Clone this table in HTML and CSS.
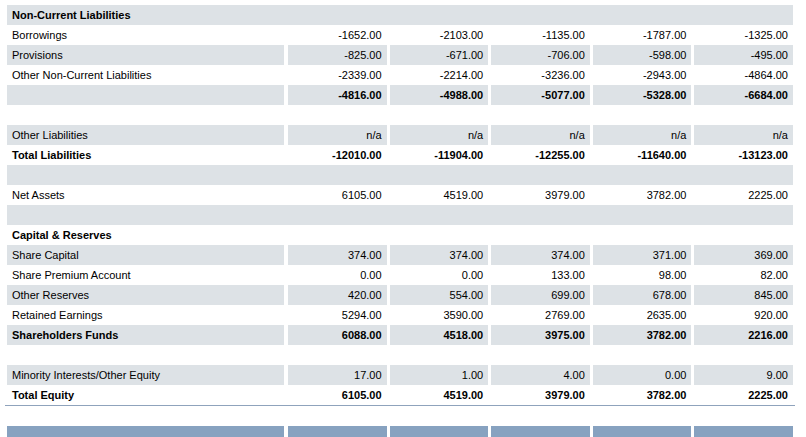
FILE: index.html
```html
<!DOCTYPE html>
<html>
<head>
<meta charset="utf-8">
<link rel="stylesheet" href="styles.css">
</head>
<body>
<div class="sheet">
  <div class="block">
    <div class="row full alt"><div class="lbl b">Non-Current Liabilities</div></div>
    <div class="row"><div class="lbl">Borrowings</div><div class="v">-1652.00</div><div class="v">-2103.00</div><div class="v">-1135.00</div><div class="v">-1787.00</div><div class="v">-1325.00</div></div>
    <div class="row alt"><div class="lbl">Provisions</div><div class="v">-825.00</div><div class="v">-671.00</div><div class="v">-706.00</div><div class="v">-598.00</div><div class="v">-495.00</div></div>
    <div class="row"><div class="lbl">Other Non-Current Liabilities</div><div class="v">-2339.00</div><div class="v">-2214.00</div><div class="v">-3236.00</div><div class="v">-2943.00</div><div class="v">-4864.00</div></div>
    <div class="row alt b"><div class="lbl"></div><div class="v">-4816.00</div><div class="v">-4988.00</div><div class="v">-5077.00</div><div class="v">-5328.00</div><div class="v">-6684.00</div></div>
    <div class="row full"></div>
    <div class="row alt"><div class="lbl">Other Liabilities</div><div class="v">n/a</div><div class="v">n/a</div><div class="v">n/a</div><div class="v">n/a</div><div class="v">n/a</div></div>
    <div class="row b"><div class="lbl">Total Liabilities</div><div class="v">-12010.00</div><div class="v">-11904.00</div><div class="v">-12255.00</div><div class="v">-11640.00</div><div class="v">-13123.00</div></div>
    <div class="row full alt"></div>
    <div class="row"><div class="lbl">Net Assets</div><div class="v">6105.00</div><div class="v">4519.00</div><div class="v">3979.00</div><div class="v">3782.00</div><div class="v">2225.00</div></div>
    <div class="row full alt"></div>
    <div class="row full"><div class="lbl b">Capital &amp; Reserves</div></div>
    <div class="row alt"><div class="lbl">Share Capital</div><div class="v">374.00</div><div class="v">374.00</div><div class="v">374.00</div><div class="v">371.00</div><div class="v">369.00</div></div>
    <div class="row"><div class="lbl">Share Premium Account</div><div class="v">0.00</div><div class="v">0.00</div><div class="v">133.00</div><div class="v">98.00</div><div class="v">82.00</div></div>
    <div class="row alt"><div class="lbl">Other Reserves</div><div class="v">420.00</div><div class="v">554.00</div><div class="v">699.00</div><div class="v">678.00</div><div class="v">845.00</div></div>
    <div class="row"><div class="lbl">Retained Earnings</div><div class="v">5294.00</div><div class="v">3590.00</div><div class="v">2769.00</div><div class="v">2635.00</div><div class="v">920.00</div></div>
    <div class="row alt b"><div class="lbl">Shareholders Funds</div><div class="v">6088.00</div><div class="v">4518.00</div><div class="v">3975.00</div><div class="v">3782.00</div><div class="v">2216.00</div></div>
    <div class="row full"></div>
    <div class="row alt"><div class="lbl">Minority Interests/Other Equity</div><div class="v">17.00</div><div class="v">1.00</div><div class="v">4.00</div><div class="v">0.00</div><div class="v">9.00</div></div>
    <div class="row b"><div class="lbl">Total Equity</div><div class="v">6105.00</div><div class="v">4519.00</div><div class="v">3979.00</div><div class="v">3782.00</div><div class="v">2225.00</div></div>
  </div>
  <div class="gap"></div>
  <div class="block">
    <div class="row bar"><div class="lbl"></div><div class="v"></div><div class="v"></div><div class="v"></div><div class="v"></div><div class="v"></div></div>
  </div>
</div>
</body>
</html>
```

FILE: styles.css
```css
html, body {
  margin: 0;
  padding: 0;
  background: #ffffff;
}
body {
  font-family: "Liberation Sans", Arial, sans-serif;
  font-size: 11px;
  color: #000;
  overflow: hidden;
}
.sheet {
  width: 790px;
  margin: 5px 0 0 5px;
}
.block {
  padding: 0 2px;
  border-bottom: 1px solid #8fa3bc;
}
.block:last-child {
  border-bottom: none;
}
.row {
  display: grid;
  grid-template-columns: 278px repeat(5, 1fr);
  column-gap: 3px;
  height: 20px;
  line-height: 20px;
}
.row.full {
  display: block;
}
.lbl {
  padding-left: 5px;
  margin-right: 1px;
  white-space: nowrap;
}
.row.full .lbl {
  margin-right: 0;
}
.v {
  text-align: right;
  padding-right: 5px;
  white-space: nowrap;
}
.alt.full,
.alt .lbl,
.alt .v {
  background: #dde2e6;
}
.b {
  font-weight: bold;
}
.gap {
  height: 20px;
}
.bar .lbl,
.bar .v {
  background: #87a2c0;
}
```
